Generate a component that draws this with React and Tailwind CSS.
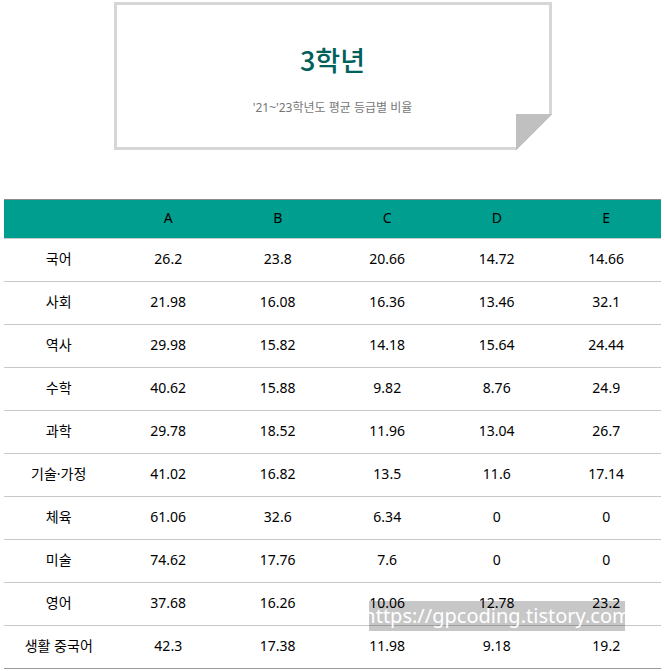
const columns = ['A', 'B', 'C', 'D', 'E']

const rows = [
  ['국어', '26.2', '23.8', '20.66', '14.72', '14.66'],
  ['사회', '21.98', '16.08', '16.36', '13.46', '32.1'],
  ['역사', '29.98', '15.82', '14.18', '15.64', '24.44'],
  ['수학', '40.62', '15.88', '9.82', '8.76', '24.9'],
  ['과학', '29.78', '18.52', '11.96', '13.04', '26.7'],
  ['기술·가정', '41.02', '16.82', '13.5', '11.6', '17.14'],
  ['체육', '61.06', '32.6', '6.34', '0', '0'],
  ['미술', '74.62', '17.76', '7.6', '0', '0'],
  ['영어', '37.68', '16.26', '10.06', '12.78', '23.2'],
]

const footRow = ['생활 중국어', '42.3', '17.38', '11.98', '9.18', '19.2']

function Row({ cells, className }) {
  return (
    <div className={`grid grid-cols-6 h-[43px] border-b ${className}`}>
      {cells.map((c, i) => (
        <div key={i} className="flex items-center justify-center pb-[4px] text-[14px] text-black">
          {c}
        </div>
      ))}
    </div>
  )
}

export default function App() {
  return (
    <div className="relative w-[665px] min-h-[671px] bg-white font-['Noto_Sans','Noto_Sans_CJK_KR',sans-serif]">
      <div className="flex justify-center pt-[2px]">
        <div className="relative w-[438px] h-[148px] border-[3px] border-[#d6d6d6] flex flex-col items-center">
          <h1 className="mt-[37px] text-[27px] leading-[36px] font-medium text-[#00605a] font-['Noto_Sans_CJK_KR',sans-serif]">
            3학년
          </h1>
          <p className="mt-[21px] text-[12px] leading-[18px] text-[#777777]">
            '21~'23학년도 평균 등급별 비율
          </p>
          <div className="absolute right-[-3px] bottom-[-3px] w-[36px] h-[36px] bg-[linear-gradient(to_bottom_right,#c0c0c0_50%,#ffffff_50%)]" />
        </div>
      </div>

      <div className="mt-[49px] mx-[4px] w-[657px]">
        <div className="grid grid-cols-6 h-[40px] bg-[#009e8e] border-t border-b border-t-[#8a8a8a] border-b-[#c8c8c8]">
          <div />
          {columns.map((c) => (
            <div key={c} className="flex items-center justify-center pb-[3px] text-[14px] text-black">
              {c}
            </div>
          ))}
        </div>
        {rows.map((r) => (
          <Row key={r[0]} cells={r} className="border-[#c8c8c8]" />
        ))}
        <Row cells={footRow} className="border-[#999999]" />
      </div>

      <div className="absolute left-[369px] top-[601px] w-[256px] h-[30px] bg-black/[0.22] flex items-center justify-center text-white text-[20px] leading-none font-['Noto_Sans',sans-serif]">
        https://gpcoding.tistory.com
      </div>
    </div>
  )
}
